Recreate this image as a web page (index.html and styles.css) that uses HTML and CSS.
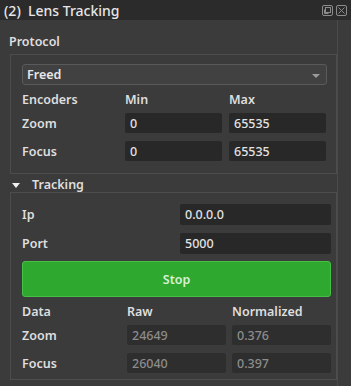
FILE: index.html
```html
<!DOCTYPE html>
<html lang="en">

<head>
    <meta charset="UTF-8" />
    <meta name="viewport" content="width=device-width, initial-scale=1" />
    <title>Lens Tracking</title>
    <link rel="stylesheet" href="styles.css">
</head>

<body>
    <div class="titlebar">
        <span class="title">(2)&nbsp; Lens Tracking</span>
        <div class="title-icons">
            <svg width="11" height="11" viewBox="0 0 11 11">
                <rect x="0.5" y="0.5" width="10" height="10" rx="1.5" fill="none" stroke="#8c8c8c" />
                <rect x="3.5" y="2.5" width="5" height="5" fill="none" stroke="#8c8c8c" />
                <path d="M2.5 4.5 V8.5 H6.5" fill="none" stroke="#8c8c8c" />
            </svg>
            <svg width="11" height="11" viewBox="0 0 11 11">
                <rect x="0.5" y="0.5" width="10" height="10" rx="1.5" fill="none" stroke="#8c8c8c" />
                <path d="M2.5 2.5 L8.5 8.5 M8.5 2.5 L2.5 8.5" stroke="#8c8c8c" />
            </svg>
        </div>
    </div>

    <div class="panel">
        <div class="section-title">Protocol</div>
        <div class="frame frame-protocol">
            <div class="dropdown">
                <span>Freed</span>
                <span class="caret"></span>
            </div>
            <div class="grid3 head-row">
                <span>Encoders</span>
                <span>Min</span>
                <span>Max</span>
            </div>
            <div class="grid3 field-row">
                <span>Zoom</span>
                <div class="field">0</div>
                <div class="field">65535</div>
            </div>
            <div class="grid3 field-row">
                <span>Focus</span>
                <div class="field">0</div>
                <div class="field">65535</div>
            </div>
        </div>

        <div class="collapse-head">
            <span class="arrow"></span>
            <span>Tracking</span>
        </div>
        <div class="frame frame-tracking">
            <div class="grid2 field-row tall">
                <span>Ip</span>
                <div class="field">0.0.0.0</div>
            </div>
            <div class="grid2 field-row tall">
                <span>Port</span>
                <div class="field">5000</div>
            </div>
            <button class="stop-btn">Stop</button>
            <div class="grid-data head-row">
                <span>Data</span>
                <span>Raw</span>
                <span>Normalized</span>
            </div>
            <div class="grid-data field-row">
                <span>Zoom</span>
                <div class="field readonly">24649</div>
                <div class="field readonly">0.376</div>
            </div>
            <div class="grid-data field-row">
                <span>Focus</span>
                <div class="field readonly">26040</div>
                <div class="field readonly">0.397</div>
            </div>
        </div>
    </div>
</body>

</html>
```

FILE: styles.css
```css
body {
    margin: 0;
    width: 351px;
    height: 386px;
    overflow: hidden;
    background-color: #3b3b3b;
    font-family: "Noto Sans", sans-serif;
    font-size: 12.5px;
    font-weight: 600;
    color: #dedede;
}

.titlebar {
    height: 20px;
    background-color: #2b2b2b;
    display: flex;
    align-items: center;
    justify-content: space-between;
    padding: 0 4px 0 4px;
}

.title {
    font-size: 14px;
    font-weight: 500;
    color: #e6e6e6;
}

.title-icons {
    display: flex;
    gap: 3px;
    padding-top: 1px;
}

.title-icons svg {
    display: block;
}

.panel {
    width: 327px;
    height: 366px;
    padding-left: 10px;
    border-right: 1px solid #4a4a4a;
    margin-right: 13px;
    box-sizing: content-box;
}

.section-title {
    height: 34px;
    box-sizing: border-box;
    padding: 14px 0 0 0;
    line-height: 16px;
    margin-left: -1px;
}

.frame {
    border: 1px solid #4d4d4d;
    width: 327px;
    box-sizing: border-box;
}

.frame-protocol {
    padding: 9px 9px 12px 11px;
}

.frame-tracking {
    padding: 11px 4px 6px 11px;
}

.dropdown {
    height: 21px;
    box-sizing: border-box;
    background-color: #414141;
    border: 1px solid #5a5a5a;
    border-radius: 3px;
    display: flex;
    align-items: center;
    justify-content: space-between;
    padding: 0 6px 0 4px;
    color: #e8e8e8;
}

.caret {
    width: 0;
    height: 0;
    border-left: 4px solid transparent;
    border-right: 4px solid transparent;
    border-top: 4px solid #9a9a9a;
    margin-top: 2px;
}

.grid3 {
    display: grid;
    grid-template-columns: 96px 97px 97px;
    column-gap: 7px;
}

.grid2 {
    display: grid;
    grid-template-columns: 158px 151px;
}

.grid-data {
    display: grid;
    grid-template-columns: 99px 99px 99px;
    column-gap: 6px;
}

.head-row {
    height: 28px;
    align-items: center;
}

.field-row {
    height: 20px;
    align-items: center;
    margin-bottom: 8px;
}

.field-row:last-child {
    margin-bottom: 0;
}

.field-row.tall {
    height: 21px;
}

.field {
    height: 100%;
    box-sizing: border-box;
    background-color: #282828;
    border-radius: 2px;
    padding: 0 5px;
    display: flex;
    align-items: center;
    color: #e2e2e2;
    font-weight: 500;
}

.field.readonly {
    background-color: #2e2e2e;
    color: #8c8c8c;
}

.collapse-head {
    height: 18px;
    box-sizing: border-box;
    padding: 4px 0 0 2px;
    line-height: 14px;
    display: flex;
    align-items: center;
    gap: 12px;
}

.arrow {
    width: 0;
    height: 0;
    border-left: 4px solid transparent;
    border-right: 4px solid transparent;
    border-top: 5px solid #f0f0f0;
}

.stop-btn {
    display: block;
    width: 309px;
    height: 36px;
    margin-top: -1px;
    background-color: #2fa82f;
    border: 1px solid #45c045;
    border-radius: 3px;
    color: #d6f2d6;
    font-family: "Noto Sans", sans-serif;
    font-size: 12.5px;
    font-weight: 600;
}
```
